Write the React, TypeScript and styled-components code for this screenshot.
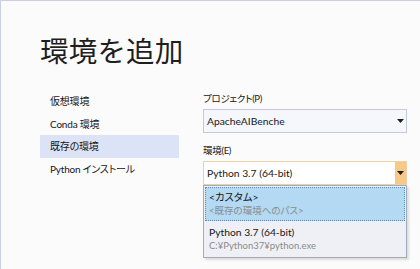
import styled, {createGlobalStyle} from "styled-components";

const GlobalStyle = createGlobalStyle`
  html, body {
    margin: 0;
    padding: 0;
    background: #fbfbfc;
  }
  body {
    font-family: "Lato", "Noto Sans CJK JP", sans-serif;
    font-feature-settings: "palt";
    color: #161616;
  }
`

const navItems = ['仮想環境', 'Conda 環境', '既存の環境', 'Python インストール']

const Arrow = () => (
    <svg width="7" height="4" viewBox="0 0 7 4">
        <path d="M0 0 H7 L3.5 4 Z" fill="#1e1e1e"/>
    </svg>
)

export default function App()
{
    return (
        <>
            <GlobalStyle/>
            <Frame>
                <Title>環境を追加</Title>
                <Body>
                    <Nav>
                        {navItems.map((item, i) =>
                            <NavItem key={item} $active={i === 2}>{item}</NavItem>
                        )}
                    </Nav>

                    <Form>
                        <Label>プロジェクト(P)</Label>
                        <Combo>
                            <ComboText>ApacheAIBenche</ComboText>
                            <ComboButton><Arrow/></ComboButton>
                        </Combo>

                        <Label $gap>環境(E)</Label>
                        <ComboWrap>
                            <Combo $open>
                                <ComboText>Python 3.7 (64-bit)</ComboText>
                                <ComboButton $open><Arrow/></ComboButton>
                            </Combo>
                            <DropList>
                                <Option $selected>
                                    <OptionTitle>&lt;カスタム&gt;</OptionTitle>
                                    <OptionSub>&lt;既存の環境へのパス&gt;</OptionSub>
                                </Option>
                                <Option>
                                    <OptionTitle>Python 3.7 (64-bit)</OptionTitle>
                                    <OptionSub>C:¥Python37¥python.exe</OptionSub>
                                </Option>
                            </DropList>
                        </ComboWrap>
                    </Form>
                </Body>
            </Frame>
        </>
    )
}

const Frame = styled.div`
  width: 419px;
  height: 268px;
  border-top: 1px solid #c6cfe4;
  border-left: 1px solid #c6cfe4;
  overflow: hidden;
`

const Title = styled.h1`
  margin: 0;
  padding: 31px 0 0 39px;
  font-family: "Noto Sans CJK JP", sans-serif;
  font-feature-settings: normal;
  font-weight: 400;
  font-size: 28.5px;
  line-height: 36px;
  color: #1e1e1e;
  letter-spacing: 0.2px;
`

const Body = styled.div`
  display: grid;
  grid-template-columns: 139px 1fr;
  column-gap: 24px;
  padding: 22px 0 0 39px;
`

const Nav = styled.div`
  display: flex;
  flex-direction: column;
`

const NavItem = styled.div<{$active?: boolean}>`
  height: 22.5px;
  line-height: 22.5px;
  padding-left: 10px;
  font-size: 10px;
  letter-spacing: -0.2px;
  background: ${p => p.$active ? '#dde3f6' : 'transparent'};
`

const Form = styled.div`
  display: flex;
  flex-direction: column;
  width: 204px;
`

const Label = styled.div<{$gap?: boolean}>`
  font-size: 9.5px;
  letter-spacing: -0.3px;
  line-height: 14px;
  margin-top: ${p => p.$gap ? '11px' : '2px'};
  margin-bottom: 3px;
`

const ComboWrap = styled.div`
  position: relative;
`

const Combo = styled.div<{$open?: boolean}>`
  height: 22px;
  display: flex;
  align-items: stretch;
  border: 1px solid ${p => p.$open ? '#ecd1a6' : '#c3cada'};
  background: ${p => p.$open ? '#ffffff' : '#f5f7fd'};
`

const ComboText = styled.div`
  flex: 1;
  display: flex;
  align-items: center;
  padding-left: 3px;
  font-size: 10.3px;
`

const ComboButton = styled.div<{$open?: boolean}>`
  width: 11px;
  display: flex;
  align-items: center;
  justify-content: center;
  background: ${p => p.$open ? '#f7c886' : 'transparent'};
`

const DropList = styled.div`
  position: absolute;
  left: 0;
  top: 24px;
  width: 202px;
  border: 1px solid #a3abbb;
  background: #eff0f6;
  box-shadow: 2px 2px 2px rgba(0, 0, 0, 0.12);
  padding-bottom: 1px;
`

const Option = styled.div<{$selected?: boolean}>`
  height: 32px;
  margin: 1px 1px 0;
  padding: 0 0 0 3px;
  display: flex;
  flex-direction: column;
  justify-content: center;
  background: ${p => p.$selected ? '#b3d9f3' : 'transparent'};
  border: 1px ${p => p.$selected ? 'dotted #5b8ec4' : 'solid transparent'};
`

const OptionTitle = styled.div`
  font-size: 10.3px;
  line-height: 14px;
`

const OptionSub = styled.div`
  font-size: 9.5px;
  line-height: 14px;
  color: #8c8c8c;
`
